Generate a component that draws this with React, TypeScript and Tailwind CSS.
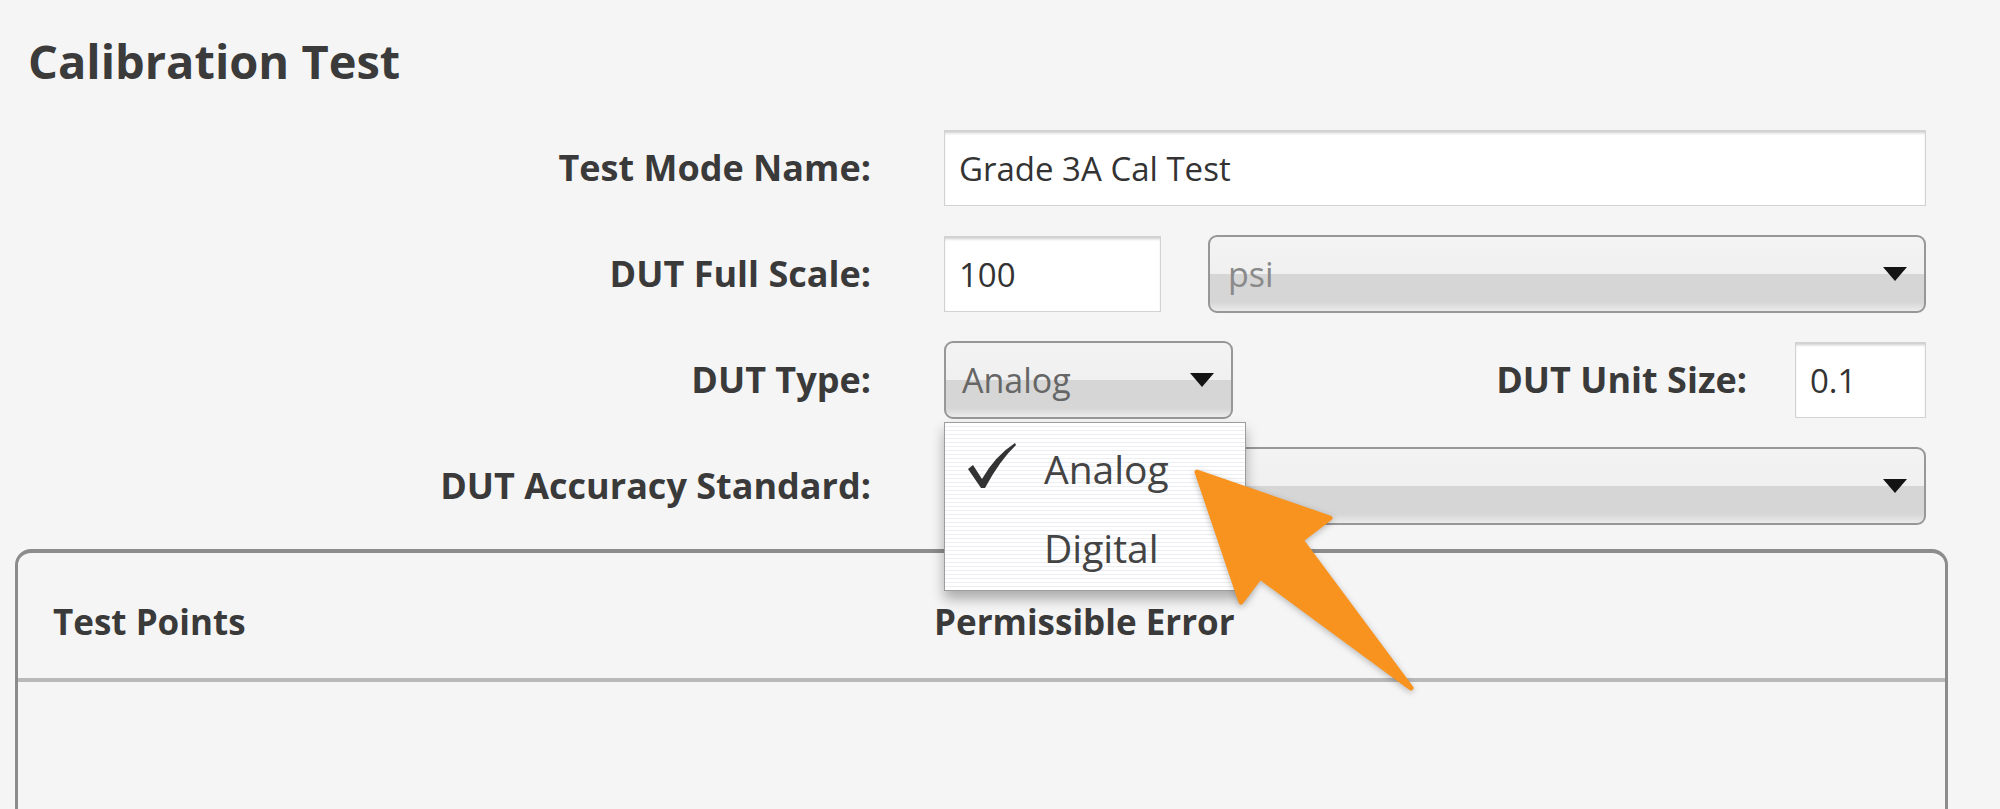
import React from "react";

const Caret = () => (
  <svg width="24" height="14" viewBox="0 0 24 14" className="shrink-0">
    <polygon points="0,0 24,0 12,14" fill="#141414" />
  </svg>
);

const TextBox = ({ value, className }: { value: string; className: string }) => (
  <div
    className={`flex h-[76px] items-center border border-[#d2d2d2] bg-white pl-[14px] text-[33px] leading-none text-[#333] shadow-[inset_0_3px_3px_-1px_rgba(0,0,0,0.2)] ${className}`}
  >
    {value}
  </div>
);

const Select = ({
  value,
  className,
  textClass,
}: {
  value: string;
  className: string;
  textClass: string;
}) => (
  <div
    className={`flex h-[78px] items-center justify-between rounded-[9px] border-2 border-[#979797] bg-[linear-gradient(to_bottom,#f3f3f3_0%,#f0f0f0_50%,#d6d6d6_50%,#d6d6d6_88%,#ebebeb_100%)] pr-[17px] ${className}`}
  >
    <span className={`text-[34px] leading-none ${textClass}`}>{value}</span>
    <Caret />
  </div>
);

const Label = ({ children }: { children: React.ReactNode }) => (
  <div className="w-[871px] shrink-0 text-right text-[36px] font-bold leading-none text-[#3a3a3a]">
    {children}
  </div>
);

export default function App() {
  return (
    <div className="relative h-[809px] w-[2000px] overflow-hidden bg-[#f5f5f5] pt-[38px] font-['Open_Sans',sans-serif]">
      <h1 className="pl-[28px] text-[47px] font-bold leading-none text-[#3b3b3b]">
        Calibration Test
      </h1>

      <div className="mt-[45px] flex flex-col gap-[30px]">
        <div className="flex h-[76px] items-center">
          <Label>Test Mode Name:</Label>
          <div className="ml-[73px] w-[982px]">
            <TextBox value="Grade 3A Cal Test" className="w-full" />
          </div>
        </div>

        <div className="flex h-[76px] items-center">
          <Label>DUT Full Scale:</Label>
          <div className="ml-[73px] flex w-[982px] items-center gap-[47px]">
            <TextBox value="100" className="w-[217px]" />
            <Select value="psi" className="flex-1 pl-[18px]" textClass="text-[#8a8a8a]" />
          </div>
        </div>

        <div className="flex h-[76px] items-center">
          <Label>DUT Type:</Label>
          <div className="ml-[73px] flex w-[982px] items-center">
            <Select value="Analog" className="w-[289px] pl-[16px]" textClass="text-[#666]" />
            <div className="ml-auto text-[36px] font-bold leading-none text-[#3a3a3a]">
              DUT Unit Size:
            </div>
            <TextBox value="0.1" className="ml-[48px] w-[131px]" />
          </div>
        </div>

        <div className="flex h-[76px] items-center">
          <Label>DUT Accuracy Standard:</Label>
          <div className="ml-[73px] w-[982px]">
            <Select value="" className="w-full pl-[16px]" textClass="text-[#666]" />
          </div>
        </div>
      </div>

      {/* Test points table */}
      <div className="ml-[15px] mt-[25px] h-[400px] w-[1933px] rounded-t-[16px] border-x-[3px] border-t-4 border-[#8c8c8c]">
        <div className="grid h-[125px] grid-cols-[881px_1fr] pl-[35px] pt-[51px] text-[35px] font-bold leading-none text-[#3a3a3a]">
          <div>Test Points</div>
          <div>Permissible Error</div>
        </div>
        <div className="h-[4px] bg-[#b9b9b9]" />
      </div>

      {/* open dropdown menu */}
      <div className="absolute left-[944px] top-[422px] flex h-[169px] w-[302px] flex-col gap-[40px] border border-[#9d9d9d] bg-[repeating-linear-gradient(to_bottom,#ffffff_0px,#ffffff_3px,#eceef2_3px,#eceef2_4px)] pl-[22px] pt-[19px] text-[39px] leading-none text-[#444] shadow-[0_8px_12px_rgba(0,0,0,0.3)]">
        <div className="flex items-end">
          <svg width="50" height="46" viewBox="0 0 50 46" className="shrink-0">
            <path
              d="M1 27 L6 23 L15 37 Q28 14 48 1 L49 3 Q33 18 18 46 L14 46 Z"
              fill="#333"
            />
          </svg>
          <span className="ml-[27px]">Analog</span>
        </div>
        <div className="flex items-end">
          <span className="ml-[77px]">Digital</span>
        </div>
      </div>

      {/* orange callout arrow */}
      <svg
        width="250"
        height="240"
        viewBox="0 0 250 240"
        className="absolute left-[1178px] top-[460px] drop-shadow-[0_2px_3px_rgba(0,0,0,0.25)]"
      >
        <polygon
          points="19,12 152,58 123,80 233,228 82,117 63,142"
          fill="#f7931e"
          stroke="#f7931e"
          strokeWidth="5"
          strokeLinejoin="round"
        />
      </svg>
    </div>
  );
}
